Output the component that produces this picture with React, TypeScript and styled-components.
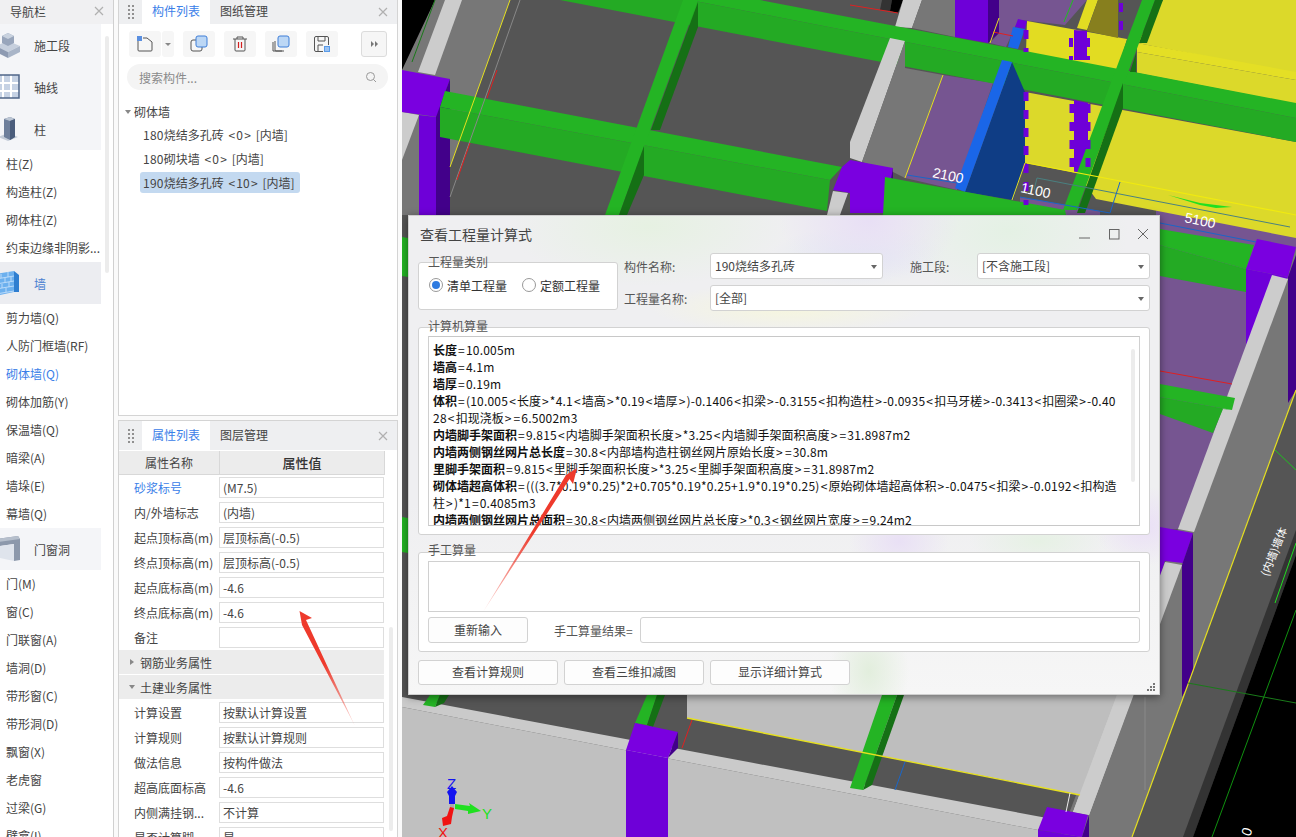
import React from "react";
import styled, { createGlobalStyle } from "styled-components";

const Global = createGlobalStyle`
  html, body { margin: 0; padding: 0; height: 837px; overflow: hidden; background: #fafafa; }
  #root { height: 837px; }
  * { box-sizing: border-box; }
  body { font-family: "Noto Sans CJK SC", "Noto Sans", sans-serif; font-size: 12px; color: #444; }
`;

const Page = styled.div`
  position: relative;
  display: grid;
  grid-template-columns: 114px 280px 1fr;
  gap: 0 4px;
  width: 1296px;
  height: 837px;
  overflow: hidden;
`;

/* ---------- navigation ---------- */
const NavPanel = styled.nav`
  position: relative;
  height: 837px;
  overflow: hidden;
  background: #fff;
  border-right: 1px solid #d0d0d0;
`;
const NavHeader = styled.div`
  height: 24px;
  display: flex;
  align-items: center;
  justify-content: space-between;
  padding: 0 9px 2px 10px;
  background: #f0f0f2;
  color: #444;
`;
const CloseGlyph = styled.svg`
  width: 10px;
  height: 10px;
  stroke: #b0b0b0;
  stroke-width: 1.2;
  fill: none;
  flex: none;
`;
const NavGroup = styled.div<{ $active?: boolean }>`
  width: 101px;
  height: 42px;
  display: flex;
  align-items: center;
  background: ${(p) => (p.$active ? "#ecedf1" : "#f4f5f8")};
  color: ${(p) => (p.$active ? "#4a7fd0" : "#444")};
  svg { width: 24px; height: 26px; margin-left: -4px; flex: none; }
  span { margin-left: 14px; }
`;
const NavItem = styled.div<{ $active?: boolean }>`
  height: 28px;
  line-height: 28px;
  padding-left: 6px;
  white-space: nowrap;
  overflow: hidden;
  color: ${(p) => (p.$active ? "#3a80e8" : "#444")};
`;
const NavThumb = styled.div`
  position: absolute;
  left: 105px;
  top: 36px;
  width: 4px;
  height: 237px;
  border-radius: 2px;
  background: #ececec;
`;

/* ---------- side panels ---------- */
const SideColumn = styled.div`
  display: grid;
  grid-template-rows: 416px 1fr;
  row-gap: 4px;
  height: 837px;
`;
const Panel = styled.section`
  position: relative;
  background: #fff;
  border: 1px solid #d4d4d4;
  border-top: none;
  overflow: hidden;
`;
const PanelBottom = styled(Panel)`
  border-top: 1px solid #d4d4d4;
  border-bottom: none;
`;
const TabBar = styled.div<{ $h: number }>`
  height: ${(p) => p.$h}px;
  display: flex;
  align-items: stretch;
  background: #eeeff1;
`;
const Grip = styled.div`
  width: 23px;
  display: grid;
  grid-template-columns: 2px 2px;
  grid-auto-rows: 2px;
  gap: 2px;
  align-content: center;
  justify-content: center;
  i { background: #909090; }
`;
const Tab = styled.div<{ $active?: boolean }>`
  width: 68px;
  display: flex;
  align-items: center;
  justify-content: center;
  padding-bottom: 3px;
  background: ${(p) => (p.$active ? "#fff" : "transparent")};
  color: ${(p) => (p.$active ? "#3a80e8" : "#444")};
  margin-right: ${(p) => (p.$active ? 0 : "auto")};
`;
const TabClose = styled.div`
  width: 29px;
  display: flex;
  align-items: center;
  justify-content: center;
`;
const Toolbar = styled.div`
  height: 40px;
  padding: 7px 10px 0;
  display: flex;
  align-items: flex-start;
`;
const ToolButton = styled.div<{ $w?: number; $mr?: number }>`
  width: ${(p) => p.$w ?? 32}px;
  height: 26px;
  margin-right: ${(p) => p.$mr ?? 9}px;
  background: #f6f6f6;
  border-radius: 3px;
  display: flex;
  align-items: center;
  justify-content: center;
  svg { width: 18px; height: 18px; }
`;
const MoreButton = styled.div`
  width: 26px;
  height: 26px;
  margin-left: auto;
  background: #f6f6f6;
  border: 1px solid #dcdcdc;
  border-radius: 3px;
  display: flex;
  align-items: center;
  justify-content: center;
  gap: 1px;
  i { width: 0; height: 0; border-left: 3px solid #777; border-top: 3px solid transparent; border-bottom: 3px solid transparent; }
`;
const Search = styled.div`
  margin: 0 9px 0 8px;
  height: 26px;
  border-radius: 13px;
  background: #f4f4f4;
  color: #8a8a8a;
  display: flex;
  align-items: center;
  justify-content: space-between;
  padding: 0 11px 0 12px;
  svg { width: 12px; height: 12px; }
`;
const Tree = styled.div`
  padding: 9px 0 0 6px;
`;
const TreeRoot = styled.div`
  height: 25px;
  display: flex;
  align-items: center;
  &::before {
    content: "";
    width: 0;
    height: 0;
    border-top: 4px solid #888;
    border-left: 3px solid transparent;
    border-right: 3px solid transparent;
    margin-right: 3px;
  }
`;
const TreeItem = styled.div<{ $selected?: boolean }>`
  height: 21px;
  line-height: 21px;
  margin: 0 0 3px 15px;
  padding-left: 3px;
  width: ${(p) => (p.$selected ? "160px" : "auto")};
  border-radius: 3px;
  background: ${(p) => (p.$selected ? "#c3d9f0" : "transparent")};
  white-space: pre;
  word-spacing: 1px;
`;
const PropHead = styled.div`
  height: 24px;
  width: 266px;
  display: grid;
  grid-template-columns: 100px 1fr;
  background: #ececec;
  border-bottom: 1px solid #d8d8d8;
  border-right: 1px solid #d8d8d8;
  margin-top: 1px;
  span { display: flex; align-items: center; justify-content: center; }
  span + span { border-left: 1px solid #d8d8d8; font-weight: 500; color: #333; font-size: 13px; }
`;
const PropRow = styled.div`
  height: 25px;
  width: 266px;
  display: grid;
  grid-template-columns: 100px 165px;
  align-items: center;
  &:first-of-type { margin-top: 2px; }
`;
const PropName = styled.div<{ $link?: boolean }>`
  padding-left: 15px;
  white-space: nowrap;
  color: ${(p) => (p.$link ? "#3a80e8" : "#444")};
`;
const PropValue = styled.div`
  height: 21px;
  line-height: 19px;
  border: 1px solid #dedede;
  padding-left: 3px;
  background: #fff;
  white-space: nowrap;
`;
const PropSection = styled.div<{ $open?: boolean }>`
  height: 24px;
  width: 265px;
  margin-bottom: 1px;
  background: #ececec;
  display: flex;
  align-items: center;
  padding-left: 10px;
  &::before {
    content: "";
    width: 0;
    height: 0;
    margin-right: 5px;
    ${(p) =>
      p.$open
        ? "border-top: 4px solid #888; border-left: 3px solid transparent; border-right: 3px solid transparent;"
        : "border-left: 4px solid #888; border-top: 3px solid transparent; border-bottom: 3px solid transparent; margin-left: 1px; margin-right: 6px;"}
  }
`;
const PropThumb = styled.div`
  position: absolute;
  left: 270px;
  top: 206px;
  width: 4px;
  height: 204px;
  border-radius: 2px;
  background: #ececec;
`;

/* ---------- canvas and dialog ---------- */
const Canvas = styled.main`
  position: relative;
  height: 837px;
  overflow: hidden;
  background: #555;
`;
const SceneSvg = styled.svg`
  display: block;
  width: 894px;
  height: 837px;
`;
const Dialog = styled.div`
  position: absolute;
  left: 6px;
  top: 215px;
  width: 752px;
  height: 480px;
  border: 1px solid #cfcfcf;
  padding: 0 9px;
  box-shadow: 0 2px 8px rgba(0, 0, 0, 0.45);
  background:
    radial-gradient(ellipse 90px 60px at 460px 5px, #e8dff5 0%, transparent 100%),
    radial-gradient(ellipse 140px 60px at 240px 10px, #e6f1e2 0%, transparent 100%),
    radial-gradient(ellipse 120px 70px at 600px 15px, #e4f1e4 0%, transparent 100%),
    radial-gradient(ellipse 90px 30px at 450px 40px, #e3e8f3 0%, transparent 100%),
    radial-gradient(ellipse 140px 25px at 380px 92px, #f6f6de 0%, transparent 100%),
    radial-gradient(ellipse 70px 30px at 630px 325px, #e6f1e4 0%, transparent 100%),
    radial-gradient(ellipse 50px 40px at 490px 325px, #e9e0f5 0%, transparent 100%),
    radial-gradient(ellipse 50px 40px at 735px 310px, #eadff6 0%, transparent 100%),
    radial-gradient(ellipse 40px 60px at 460px 455px, #e2eedd 0%, transparent 100%),
    linear-gradient(180deg, #efeff1 0%, #efeff1 60%, #f6f6f6 100%);
`;
const TitleBar = styled.div`
  height: 37px;
  display: flex;
  align-items: center;
  padding: 0 0 2px 2px;
  font-size: 14px;
  color: #444;
`;
const WinControls = styled.div`
  margin-left: auto;
  margin-right: 1px;
  display: flex;
  align-items: center;
  gap: 17px;
  svg { width: 12px; height: 12px; stroke: #666; stroke-width: 1; fill: none; }
`;
const FilterRow = styled.div`
  display: flex;
  height: 58px;
`;
const GroupBox = styled.div<{ $h: number }>`
  position: relative;
  height: ${(p) => p.$h}px;
  background: #fff;
  border: 1px solid #d2d2d2;
  border-radius: 3px;
`;
const Legend = styled.div<{ $top: number }>`
  position: absolute;
  left: 9px;
  top: ${(p) => p.$top}px;
  line-height: 16px;
  color: #555;
`;
const CategoryBox = styled(GroupBox)`
  width: 200px;
  margin-top: 9px;
  display: flex;
  align-items: center;
  padding: 0 0 2px 10px;
`;
const RadioLabel = styled.label`
  display: flex;
  align-items: center;
  color: #333;
  & + & { margin-left: 15px; }
`;
const RadioMark = styled.span<{ $on?: boolean }>`
  width: 14px;
  height: 14px;
  border-radius: 50%;
  border: 1px solid #999;
  background: #fff;
  margin-right: 4px;
  display: flex;
  align-items: center;
  justify-content: center;
  &::after {
    content: "";
    width: 8px;
    height: 8px;
    border-radius: 50%;
    background: ${(p) => (p.$on ? "#2f7be0" : "transparent")};
  }
`;
const Fields = styled.div`
  margin-left: 6px;
  width: 526px;
  display: grid;
  grid-template-columns: 86px 173px 27px 40px 27px 173px;
  grid-template-rows: 26px 26px;
  row-gap: 6px;
  align-items: center;
  color: #555;
`;
const FieldLabel = styled.span`
  white-space: nowrap;
`;
const Select = styled.div<{ $wide?: boolean }>`
  position: relative;
  grid-column: ${(p) => (p.$wide ? "2 / 7" : "auto")};
  height: 26px;
  line-height: 24px;
  padding-left: 4px;
  background: #fff;
  border: 1px solid #d2d2d2;
  border-radius: 3px;
  color: #444;
  white-space: nowrap;
  &::after {
    content: "";
    position: absolute;
    right: 5px;
    top: 11px;
    border-top: 4px solid #666;
    border-left: 3px solid transparent;
    border-right: 3px solid transparent;
  }
`;
const CalcGroup = styled(GroupBox)`
  margin-top: 16px;
  padding: 8px 9px;
`;
const CalcText = styled.div`
  position: relative;
  height: 190px;
  border: 1px solid #d0d0d0;
  border-bottom-color: #c8c8c8;
  border-top-color: #c8c8c8;
  padding: 4px 0 0 4px;
  overflow: hidden;
  color: #111;
  white-space: pre;
  line-height: 17px;
  b { font-weight: 700; }
`;
const Op = styled.span`
  padding: 0 1.1px;
`;
const Num = styled.span`
  letter-spacing: 0.22px;
`;
const CalcThumb = styled.div`
  position: absolute;
  left: 702px;
  top: 12px;
  width: 4px;
  height: 133px;
  background: #ececec;
  border-radius: 2px;
`;
const ManualGroup = styled(GroupBox)`
  margin-top: 17px;
  padding: 8px 9px;
`;
const ManualArea = styled.div`
  height: 51px;
  border: 1px solid #d0d0d0;
  background: #fff;
`;
const ManualRow = styled.div`
  margin-top: 5px;
  height: 26px;
  display: flex;
  align-items: center;
`;
const Btn = styled.div<{ $w: number }>`
  width: ${(p) => p.$w}px;
  height: 100%;
  display: flex;
  align-items: center;
  justify-content: center;
  padding-bottom: 2px;
  border: 1px solid #d2d2d2;
  border-radius: 3px;
  background: #fdfdfd;
  color: #444;
`;
const ResultLabel = styled.span`
  margin-left: 26px;
  width: 86px;
  color: #555;
`;
const ResultInput = styled.div`
  flex: 1;
  height: 100%;
  border: 1px solid #d2d2d2;
  border-radius: 3px;
  background: #fff;
`;
const Footer = styled.div`
  margin-top: 8px;
  height: 25px;
  display: flex;
  gap: 6px;
`;
const ResizeGrip = styled.svg`
  position: absolute;
  right: 3px;
  bottom: 2px;
  width: 9px;
  height: 9px;
  fill: #777;
`;
const ArrowLayer = styled.svg`
  position: absolute;
  left: 0;
  top: 0;
  width: 1296px;
  height: 837px;
  pointer-events: none;
`;

/* ---------- data ---------- */
const X = () => (
  <CloseGlyph viewBox="0 0 10 10"><path d="M1 1L9 9M9 1L1 9" /></CloseGlyph>
);
const Dots = () => (
  <Grip>{Array.from({ length: 8 }).map((_, i) => <i key={i} />)}</Grip>
);
/* the reference font has wider operators and digits */
const fmt = (s: string) =>
  s.split(/([<>=]|[\d.*+\-()m]+)/).map((t, i) =>
    /^[<>=]$/.test(t) ? <Op key={i}>{t}</Op> : /^[\d.*+\-()m]+$/.test(t) ? <Num key={i}>{t}</Num> : t
  );
const CalcLine = ({ label, text }: { label?: string; text: string }) => (
  <>
    {label ? <b>{label}</b> : null}
    {fmt(text)}
    {"\n"}
  </>
);

const BlockIcon = () => (
  <svg viewBox="0 0 24 26">
    <path d="M12 9 L24 14 L12 20 L0 14Z" fill="#c6cfdd" />
    <path d="M0 14 L12 20 V26 L0 20Z" fill="#8d9ab2" />
    <path d="M24 14 L12 20 V26 L24 20Z" fill="#a9b5c8" />
    <path d="M12 1 L18 4 L18 11 L12 14 L6 11 L6 4Z" fill="#98a5bb" />
    <path d="M12 1 L18 4 L12 7 L6 4Z" fill="#c9d2df" />
  </svg>
);
const GridIcon = () => (
  <svg viewBox="0 0 24 26">
    <rect x="0" y="1" width="23" height="23" fill="#c6d2e4" />
    <path d="M7 1V24M15 1V24M0 9H23M0 17H23" stroke="#fff" strokeWidth="2" />
    <path d="M0 1H23V24H0" fill="none" stroke="#4f6588" strokeWidth="1.5" />
  </svg>
);
const ColumnIcon = () => (
  <svg viewBox="0 0 24 26">
    <path d="M2 21 L12 17 L22 21 L12 25Z" fill="#c4ccd8" />
    <path d="M8 3 L14 1 L19 3 V21 L14 24 L8 21Z" fill="#6e7f9b" />
    <path d="M8 3 L14 1 L19 3 L14 5Z" fill="#bcc6d4" />
    <path d="M14 5 L19 3 V21 L14 24Z" fill="#4b5d7c" />
  </svg>
);
const WallIcon = () => (
  <svg viewBox="0 0 24 26">
    <path d="M0 4 L18 1 V22 L0 26Z" fill="#6cb0ee" />
    <path d="M18 1 L23 5 V22 L18 22Z" fill="#2f7ed0" />
    <path d="M0 9 L18 6M0 14 L18 11M0 19 L18 16M0 24 L18 21M5 4V8M12 2V7M3 9V13M9 8V12M15 7V11M6 14V18M13 12V17M3 19V23M10 18V22" stroke="#c4e0fa" strokeWidth="0.9" />
  </svg>
);
const DoorIcon = () => (
  <svg viewBox="0 0 24 26">
    <path d="M0 3 L22 0 L24 3 V24 L18 25 V8 L4 10 V22 L0 24Z" fill="#8c98ab" />
    <path d="M4 10 L18 8 V25 L4 22Z" fill="#dfe4ec" />
    <path d="M0 3 L22 0 L24 3 L2 6Z" fill="#b6bfcc" />
  </svg>
);

type Row = { name: string; value: string; link?: boolean };
const props1: Row[] = [
  { name: "砂浆标号", value: "(M7.5)", link: true },
  { name: "内/外墙标志", value: "(内墙)" },
  { name: "起点顶标高(m)", value: "层顶标高(-0.5)" },
  { name: "终点顶标高(m)", value: "层顶标高(-0.5)" },
  { name: "起点底标高(m)", value: "-4.6" },
  { name: "终点底标高(m)", value: "-4.6" },
  { name: "备注", value: "" },
];
const props2: Row[] = [
  { name: "计算设置", value: "按默认计算设置" },
  { name: "计算规则", value: "按默认计算规则" },
  { name: "做法信息", value: "按构件做法" },
  { name: "超高底面标高", value: "-4.6" },
  { name: "内侧满挂钢...", value: "不计算" },
  { name: "是否计算脚...", value: "是" },
];

/* 3D view as a flat drawing, in page coordinates */
const L = "#24b424";
const F = "#24aa24";
const D = "#157015";
const P1 = "#7a00e0";
const P2 = "#6e00d8";
const P3 = "#42008a";
const W = "#cccccc";
const G = "#777777";
const V = "#765591";
const Y = "#dcd92a";
const polys: [string, string][] = [
  // top left
  ["#000", "402,0 435,0 412,70 402,70"],
  [G, "435,0 510,0 450,167 450,215 402,215 402,70"],
  [W, "445,0 462,0 435,75 418,72"],
  [W, "402,112 419,115 402,160"],
  // upper right floors
  ["#333", "882,0 892,0 890,11 880,10"],
  ["#000", "892,0 903,0 898,13 890,11"],
  [W, "903,0 922,0 912,28 895,27"],
  [G, "922,0 955,0 955,37 912,28"],
  [V, "999,0 1087,0 1065,25 1020,20 1015,27 1006,47 990,43 999,33"],
  [V, "943,75 993,83 957,190 905,178"],
  [V, "1020,197 1100,211 1100,215 1020,215"],
  [V, "1156,205 1296,232 1296,280 1178,529 1156,529"],
  // yellow walls
  ["#e2dc22", "1027,21 1127,39 1117,72 1026,52"],
  [Y, "1025,92 1296,142 1296,238 1096,199 1077,173 1025,163"],
  [Y, "1163,0 1296,0 1296,74 1137,43"],
  ["#e4df25", "1137,43 1296,72 1296,80 1137,52"],
  [Y, "1137,52 1296,80 1296,104 1137,73"],
  ["#e2dc22", "1087,0 1098,0 1087,30 1077,28"],
  ["#877f1e", "1098,0 1118,0 1118,38 1087,31"],
  [P2, "1018,19 1027,21 1025,29 1015,27"],
  [P2, "1074,30 1087,31 1087,60 1074,60"],
  [P2, "1074,100 1088,103 1088,172 1074,172"],
  // beams
  [F, "560,0 690,0 1296,118 1296,142"],
  [L, "690,0 760,0 1296,103 1296,118"],
  // band under column over the beam
  [W, "890,38 905,41 862,162 850,158 850,142"],
  [G, "905,41 905,68 943,75 905,178 893,172 862,162"],
  // blue wall
  ["#0f3d85", "1012,62 1025,92 1025,163 1013,200 965,192"],
  ["#1a66e8", "1002,60 1012,62 965,192 955,188"],
  ["#1a66e8", "1013,27 1025,29 1018,49 1008,47"],
  ["#1a66e8", "947,215 952,205 958,207 957,215"],
  // first purple column and beam
  [P1, "402,70 450,79 437,117 402,112"],
  [P2, "419,115 436,117 436,215 419,215"],
  [P3, "436,117 450,79 450,215 436,215"],
  [F, "440,107 830,180 827,211 440,137"],
  [L, "445,91 842,167 830,180 440,107"],
  [L, "683,0 698,0 619,215 605,215"],
  [D, "698,2 698,27 660,130 651,130"],
  [D, "644,146 644,175 627,215 619,215"],
  [P1, "842,167 850,160 850,193 833,190"],
  [W, "833,191 848,193 840,215 827,215"],
  [P1, "850,160 893,168 885,213 850,213"],
  [P3, "893,168 893,178 885,213"],
  [P2, "955,0 988,0 988,43 955,37"],
  [P3, "988,0 999,0 999,33 988,43"],
  [L, "885,177 1065,210 1066,215 883,215"],
  // right beam column
  [L, "1142,0 1155,0 1077,210 1063,210"],
  [D, "1155,0 1163,0 1147,43 1139,43"],
  [D, "1123,83 1123,108 1085,213 1077,213"],
  [D, "1136,53 1130,72 1136,72"],
  // right side, under dialog
  [G, "1296,250 1296,390 1132,837 1060,837 1178,529"],
  [F, "1160,245 1246,269 1246,292 1160,276"],
  [L, "1160,229 1254,245 1246,269 1160,245"],
  [P2, "1246,269 1288,277 1246,345"],
  [P1, "1257,239 1296,247 1288,277 1246,269"],
  [P3, "1288,277 1296,255 1296,390 1288,403"],
  [W, "1272,275 1288,279 1194,532 1178,529"],
  [F, "1160,397 1232,410 1223,409 1213,433 1160,414"],
  [L, "1160,384 1235,398 1232,410 1160,397"],
  // bottom right column
  [P1, "1160,527 1193,533 1183,563 1165,561 1160,577"],
  [P3, "1193,533 1193,675 1182,697 1182,565"],
  [W, "1165,562 1182,565 1089,815 1073,812"],
  // dark bands bottom right
  ["#555", "1296,390 1132,837 1183,837 1296,530"],
  ["#333", "1296,530 1183,837 1193,837 1296,555"],
  ["#000", "1296,555 1193,837 1296,837"],
  // wall under the dialog
  ["#bebebe", "687,695 1117,695 1080,795 687,718"],
  [W, "1117,695 1133,695 1089,815 1073,812"],
  ["#c0c0c0", "402,707 1038,830 1038,837 402,837"],
  ["#cacaca", "402,697 1047,818 1038,830 402,707"],
  [L, "423,705 435,707 440,695 430,695"],
  [D, "440,695 449,695 444,703 435,707"],
  [L, "635,723 647,725 657,695 647,695"],
  [D, "647,725 653,727 665,695 657,695"],
  [L, "850,788 863,790 897,695 882,695"],
  [D, "863,790 872,785 904,695 897,695"],
  // bottom columns
  [P2, "626,750 668,758 668,837 626,837"],
  [P1, "635,723 678,732 668,758 626,750"],
  [P3, "678,732 678,748 668,758"],
  [P2, "1038,830 1082,837 1038,837"],
  [P1, "1047,807 1088,815 1082,837 1038,830"],
  [P3, "1089,815 1089,837 1082,837"],
  // left strip
  [L, "402,237 408,238 408,277 402,276"],
  [L, "402,517 408,518 408,553 402,552"],
];
const lines: [number, number, number, number, string, number?][] = [
  [435, 0, 412, 62, "#1a7a1a"],
  [510, 0, 450, 167, "#e6e020"],
  [520, 0, 450, 197, "#888"],
  [497, 70, 487, 98, "#e02020"],
  [470, 143, 457, 180, "#e02020"],
  [850, 5, 898, 13, "#e02020"],
  [1073, 0, 1064, 22, "#1fc01f"],
  [993, 32, 1013, 36, "#e02020"],
  [999, 18, 990, 43, "#e6e020"],
  [943, 75, 905, 178, "#e6e020"],
  [907, 175, 957, 183, "#1a66c8"],
  [1025, 163, 1012, 200, "#e6e020"],
  [1027, 163, 1296, 215, "#f0ea10", 1.2],
  [1037, 178, 1290, 227, "#4a8080"],
  [1037, 178, 1034, 190, "#4a8080"],
  [1020, 197, 1110, 213, "#1a66c8"],
  [1120, 182, 1110, 213, "#1a66c8"],
  [1160, 223, 1256, 242, "#1a66c8"],
  [1160, 371, 1232, 384, "#e02020"],
  [1296, 390, 1132, 837, "#e6e020", 1.2],
  [687, 718, 1080, 795, "#e6e020", 1.4],
  [692, 720, 682, 748, "#e02020"],
  [905, 762, 895, 790, "#1a66c8"],
  [1070, 793, 1066, 812, "#eee"],
  [1145, 697, 1145, 790, "#8a8a8a"],
  [1188, 683, 1296, 703, "#1a7a1a"],
  [1296, 610, 1212, 837, "#0f900f"],
  [1275, 603, 1296, 543, "#20e020"],
  [1275, 450, 1296, 470, "#20c020"],
];
const zigs: [number, number, number, number, number][] = [
  [1026, 92, 1026, 205, 5],
  [1026, 30, 1026, 52, 5],
  [1121, 3, 1121, 32, 4],
  [1071, 38, 1071, 60, 4],
  [1088, 38, 1088, 60, 4],
  [1072, 104, 1072, 176, 5],
  [1088, 104, 1088, 176, 5],
];
const dims: [string, number, number, number][] = [
  ["2100", 932, 177, 12],
  ["1100", 1020, 192, 12],
  ["5100", 1184, 222, 12],
];

const Scene = () => (
  <SceneSvg viewBox="402 0 894 837">
    {polys.map(([c, p], i) => <polygon key={i} fill={c} points={p} />)}
    {zigs.map(([x1, y1, x2, y2, w], i) => (
      <line key={i} x1={x1} y1={y1} x2={x2} y2={y2} stroke={P2} strokeWidth={w} strokeDasharray="9 9" />
    ))}
    {lines.map(([x1, y1, x2, y2, c, w], i) => (
      <line key={i} x1={x1} y1={y1} x2={x2} y2={y2} stroke={c} strokeWidth={w ?? 1} />
    ))}
    {dims.map(([t, x, y, r]) => (
      <text key={t} x={x} y={y} fill="#fff" fontSize="14" fontFamily="Liberation Sans, sans-serif" transform={`rotate(${r} ${x} ${y})`}>{t}</text>
    ))}
    <text x={1268} y={577} fill="#fff" fontSize="11" transform="rotate(-68 1268 577)">(内墙)墙体</text>
    <text x={1250} y={837} fill="#fff" fontSize="14" fontFamily="Liberation Sans, sans-serif" transform="rotate(-70 1250 837)">0</text>
    {/* green arrow */}
    <polygon fill="#20e020" points="1168,195 1200,203 1232,207 1216,208 1200,205" />
    {/* axes */}
    <rect x="450" y="802" width="4" height="8" fill="#aaa" />
    <polygon fill="#1313f0" points="452,786 457,792 455,796 455,804 449,804 449,796 447,792" />
    <polygon fill="#20e020" points="455,804 470,806 469,803 481,811 468,814 468,811 455,809" />
    <polygon fill="#f01313" points="450,807 454,808 452,817 451,824 443,826 442,818 447,816" />
    <text x="447" y="789" fill="#1313f0" fontSize="15" fontFamily="Liberation Sans, sans-serif">Z</text>
    <text x="482" y="819" fill="#20e020" fontSize="15" fontFamily="Liberation Sans, sans-serif">Y</text>
    <text x="438" y="838" fill="#f01313" fontSize="15" fontFamily="Liberation Sans, sans-serif">X</text>
  </SceneSvg>
);

export default function App() {
  return (
    <Page>
      <Global />
      <NavPanel>
        <NavHeader>导航栏<X /></NavHeader>
        <NavGroup><BlockIcon /><span>施工段</span></NavGroup>
        <NavGroup><GridIcon /><span>轴线</span></NavGroup>
        <NavGroup><ColumnIcon /><span>柱</span></NavGroup>
        {["柱(Z)", "构造柱(Z)", "砌体柱(Z)", "约束边缘非阴影..."].map((t) => <NavItem key={t}>{t}</NavItem>)}
        <NavGroup $active><WallIcon /><span>墙</span></NavGroup>
        {["剪力墙(Q)", "人防门框墙(RF)", "砌体墙(Q)", "砌体加筋(Y)", "保温墙(Q)", "暗梁(A)", "墙垛(E)", "幕墙(Q)"].map((t) => (
          <NavItem key={t} $active={t === "砌体墙(Q)"}>{t}</NavItem>
        ))}
        <NavGroup><DoorIcon /><span>门窗洞</span></NavGroup>
        {["门(M)", "窗(C)", "门联窗(A)", "墙洞(D)", "带形窗(C)", "带形洞(D)", "飘窗(X)", "老虎窗", "过梁(G)", "壁龛(I)"].map((t) => (
          <NavItem key={t}>{t}</NavItem>
        ))}
        <NavThumb />
      </NavPanel>

      <SideColumn>
        <Panel>
          <TabBar $h={24}>
            <Dots />
            <Tab $active>构件列表</Tab>
            <Tab>图纸管理</Tab>
            <TabClose><X /></TabClose>
          </TabBar>
          <Toolbar>
            <ToolButton $w={32} $mr={1}>
              <svg viewBox="0 0 18 18" fill="none">
                <path d="M2 6 V15 Q2 16 3 16 H15 Q16 16 16 15 V7 L11 3 H7" stroke="#555" />
                <rect x="1" y="1" width="5" height="5" fill="#5a8fe0" />
              </svg>
            </ToolButton>
            <ToolButton $w={12} $mr={9}>
              <svg viewBox="0 0 12 18"><path d="M3 8H9L6 11Z" fill="#888" /></svg>
            </ToolButton>
            <ToolButton>
              <svg viewBox="0 0 18 18" fill="none">
                <rect x="1" y="5" width="11" height="11" rx="2" stroke="#555" />
                <rect x="6" y="1" width="11" height="11" rx="2" stroke="#3f7fd8" fill="#bcd7f5" />
              </svg>
            </ToolButton>
            <ToolButton>
              <svg viewBox="0 0 18 18" fill="none">
                <path d="M2 4H16M6 4V2H12V4M4 4V15Q4 16 5 16H13Q14 16 14 15V4" stroke="#555" />
                <path d="M7.5 7V13M10.5 7V13" stroke="#d42020" strokeWidth="1.2" />
              </svg>
            </ToolButton>
            <ToolButton>
              <svg viewBox="0 0 18 18" fill="none">
                <path d="M3 6V15Q3 16 4 16H12" stroke="#555" />
                <path d="M1 8V17H10" stroke="#555" transform="translate(0 -1)" />
                <rect x="6" y="1" width="11" height="11" rx="2" stroke="#3f7fd8" fill="#bcd7f5" />
              </svg>
            </ToolButton>
            <ToolButton>
              <svg viewBox="0 0 18 18" fill="none">
                <path d="M1.5 3Q1.5 1.5 3 1.5H14Q15.5 1.5 15.5 3V10M10 16.5H3Q1.5 16.5 1.5 15V3M5 2V6H12V2M5 16V10H10" stroke="#555" />
                <rect x="11" y="11" width="6" height="6" fill="#5a9be8" />
                <path d="M12 13H16M12 15H16" stroke="#fff" strokeWidth=".8" />
              </svg>
            </ToolButton>
            <MoreButton><i /><i /></MoreButton>
          </Toolbar>
          <Search>
            搜索构件...
            <svg viewBox="0 0 12 12" fill="none" stroke="#999"><circle cx="5.5" cy="5.5" r="4" /><path d="M8.5 8.5L11 11" /></svg>
          </Search>
          <Tree>
            <TreeRoot>砌体墙</TreeRoot>
            <TreeItem>{fmt("180烧结多孔砖 <0> [内墙]")}</TreeItem>
            <TreeItem>{fmt("180砌块墙 <0> [内墙]")}</TreeItem>
            <TreeItem $selected>{fmt("190烧结多孔砖 <10> [内墙]")}</TreeItem>
          </Tree>
        </Panel>

        <PanelBottom>
          <TabBar $h={29}>
            <Dots />
            <Tab $active>属性列表</Tab>
            <Tab>图层管理</Tab>
            <TabClose><X /></TabClose>
          </TabBar>
          <PropHead><span>属性名称</span><span>属性值</span></PropHead>
          {props1.map((r) => (
            <PropRow key={r.name}><PropName $link={r.link}>{r.name}</PropName><PropValue>{r.value}</PropValue></PropRow>
          ))}
          <PropSection>钢筋业务属性</PropSection>
          <PropSection $open>土建业务属性</PropSection>
          {props2.map((r) => (
            <PropRow key={r.name}><PropName>{r.name}</PropName><PropValue>{r.value}</PropValue></PropRow>
          ))}
          <PropThumb />
        </PanelBottom>
      </SideColumn>

      <Canvas>
        <Scene />
        <Dialog>
          <TitleBar>
            查看工程量计算式
            <WinControls>
              <svg viewBox="0 0 12 12"><path d="M0 10H11" /></svg>
              <svg viewBox="0 0 12 12"><rect x="1.5" y="1.5" width="9.5" height="9.5" /></svg>
              <svg viewBox="0 0 12 12"><path d="M1 1L11 11M11 1L1 11" /></svg>
            </WinControls>
          </TitleBar>
          <FilterRow>
            <CategoryBox $h={48}>
              <Legend $top={-9}>工程量类别</Legend>
              <RadioLabel><RadioMark $on />清单工程量</RadioLabel>
              <RadioLabel><RadioMark />定额工程量</RadioLabel>
            </CategoryBox>
            <Fields>
              <FieldLabel>构件名称:</FieldLabel>
              <Select>190烧结多孔砖</Select>
              <span />
              <FieldLabel>施工段:</FieldLabel>
              <span />
              <Select>[不含施工段]</Select>
              <FieldLabel>工程量名称:</FieldLabel>
              <Select $wide>[全部]</Select>
            </Fields>
          </FilterRow>
          <CalcGroup $h={208}>
            <Legend $top={-10}>计算机算量</Legend>
            <CalcText>
              <CalcLine label="长度" text="=10.005m" />
              <CalcLine label="墙高" text="=4.1m" />
              <CalcLine label="墙厚" text="=0.19m" />
              <CalcLine label="体积" text="=(10.005<长度>*4.1<墙高>*0.19<墙厚>)-0.1406<扣梁>-0.3155<扣构造柱>-0.0935<扣马牙槎>-0.3413<扣圈梁>-0.40" />
              <CalcLine text="28<扣现浇板>=6.5002m3" />
              <CalcLine label="内墙脚手架面积" text="=9.815<内墙脚手架面积长度>*3.25<内墙脚手架面积高度>=31.8987m2" />
              <CalcLine label="内墙两侧钢丝网片总长度" text="=30.8<内部墙构造柱钢丝网片原始长度>=30.8m" />
              <CalcLine label="里脚手架面积" text="=9.815<里脚手架面积长度>*3.25<里脚手架面积高度>=31.8987m2" />
              <CalcLine label="砌体墙超高体积" text="=(((3.7*0.19*0.25)*2+0.705*0.19*0.25+1.9*0.19*0.25)<原始砌体墙超高体积>-0.0475<扣梁>-0.0192<扣构造" />
              <CalcLine text="柱>)*1=0.4085m3" />
              <CalcLine label="内墙两侧钢丝网片总面积" text="=30.8<内墙两侧钢丝网片总长度>*0.3<钢丝网片宽度>=9.24m2" />
              <CalcThumb />
            </CalcText>
          </CalcGroup>
          <ManualGroup $h={100}>
            <Legend $top={-11}>手工算量</Legend>
            <ManualArea />
            <ManualRow>
              <Btn $w={100}>重新输入</Btn>
              <ResultLabel>手工算量结果=</ResultLabel>
              <ResultInput />
            </ManualRow>
          </ManualGroup>
          <Footer>
            <Btn $w={140}>查看计算规则</Btn>
            <Btn $w={140}>查看三维扣减图</Btn>
            <Btn $w={140}>显示详细计算式</Btn>
          </Footer>
          <ResizeGrip viewBox="0 0 9 9">
            <rect x="6" y="0" width="2" height="2" />
            <rect x="3" y="3" width="2" height="2" />
            <rect x="6" y="3" width="2" height="2" />
            <rect x="0" y="6" width="2" height="2" />
            <rect x="3" y="6" width="2" height="2" />
            <rect x="6" y="6" width="2" height="2" />
          </ResizeGrip>
        </Dialog>
      </Canvas>

      <ArrowLayer viewBox="0 0 1296 837">
        <defs>
          <linearGradient id="a1" gradientUnits="userSpaceOnUse" x1="300" y1="612" x2="355" y2="726">
            <stop offset="0.45" stopColor="#ee3a2c" />
            <stop offset="1" stopColor="#ee3a2c" stopOpacity="0.15" />
          </linearGradient>
          <linearGradient id="a2" gradientUnits="userSpaceOnUse" x1="577" y1="468" x2="483" y2="612">
            <stop offset="0.45" stopColor="#ee3a2c" />
            <stop offset="1" stopColor="#ee3a2c" stopOpacity="0.15" />
          </linearGradient>
        </defs>
        <polygon fill="url(#a1)" points="299.5,611 312,618 306,620 355,726 302,625" />
        <polygon fill="url(#a2)" points="577,468 573,484 569.5,479 483,612 566,475 563,477" />
      </ArrowLayer>
    </Page>
  );
}
